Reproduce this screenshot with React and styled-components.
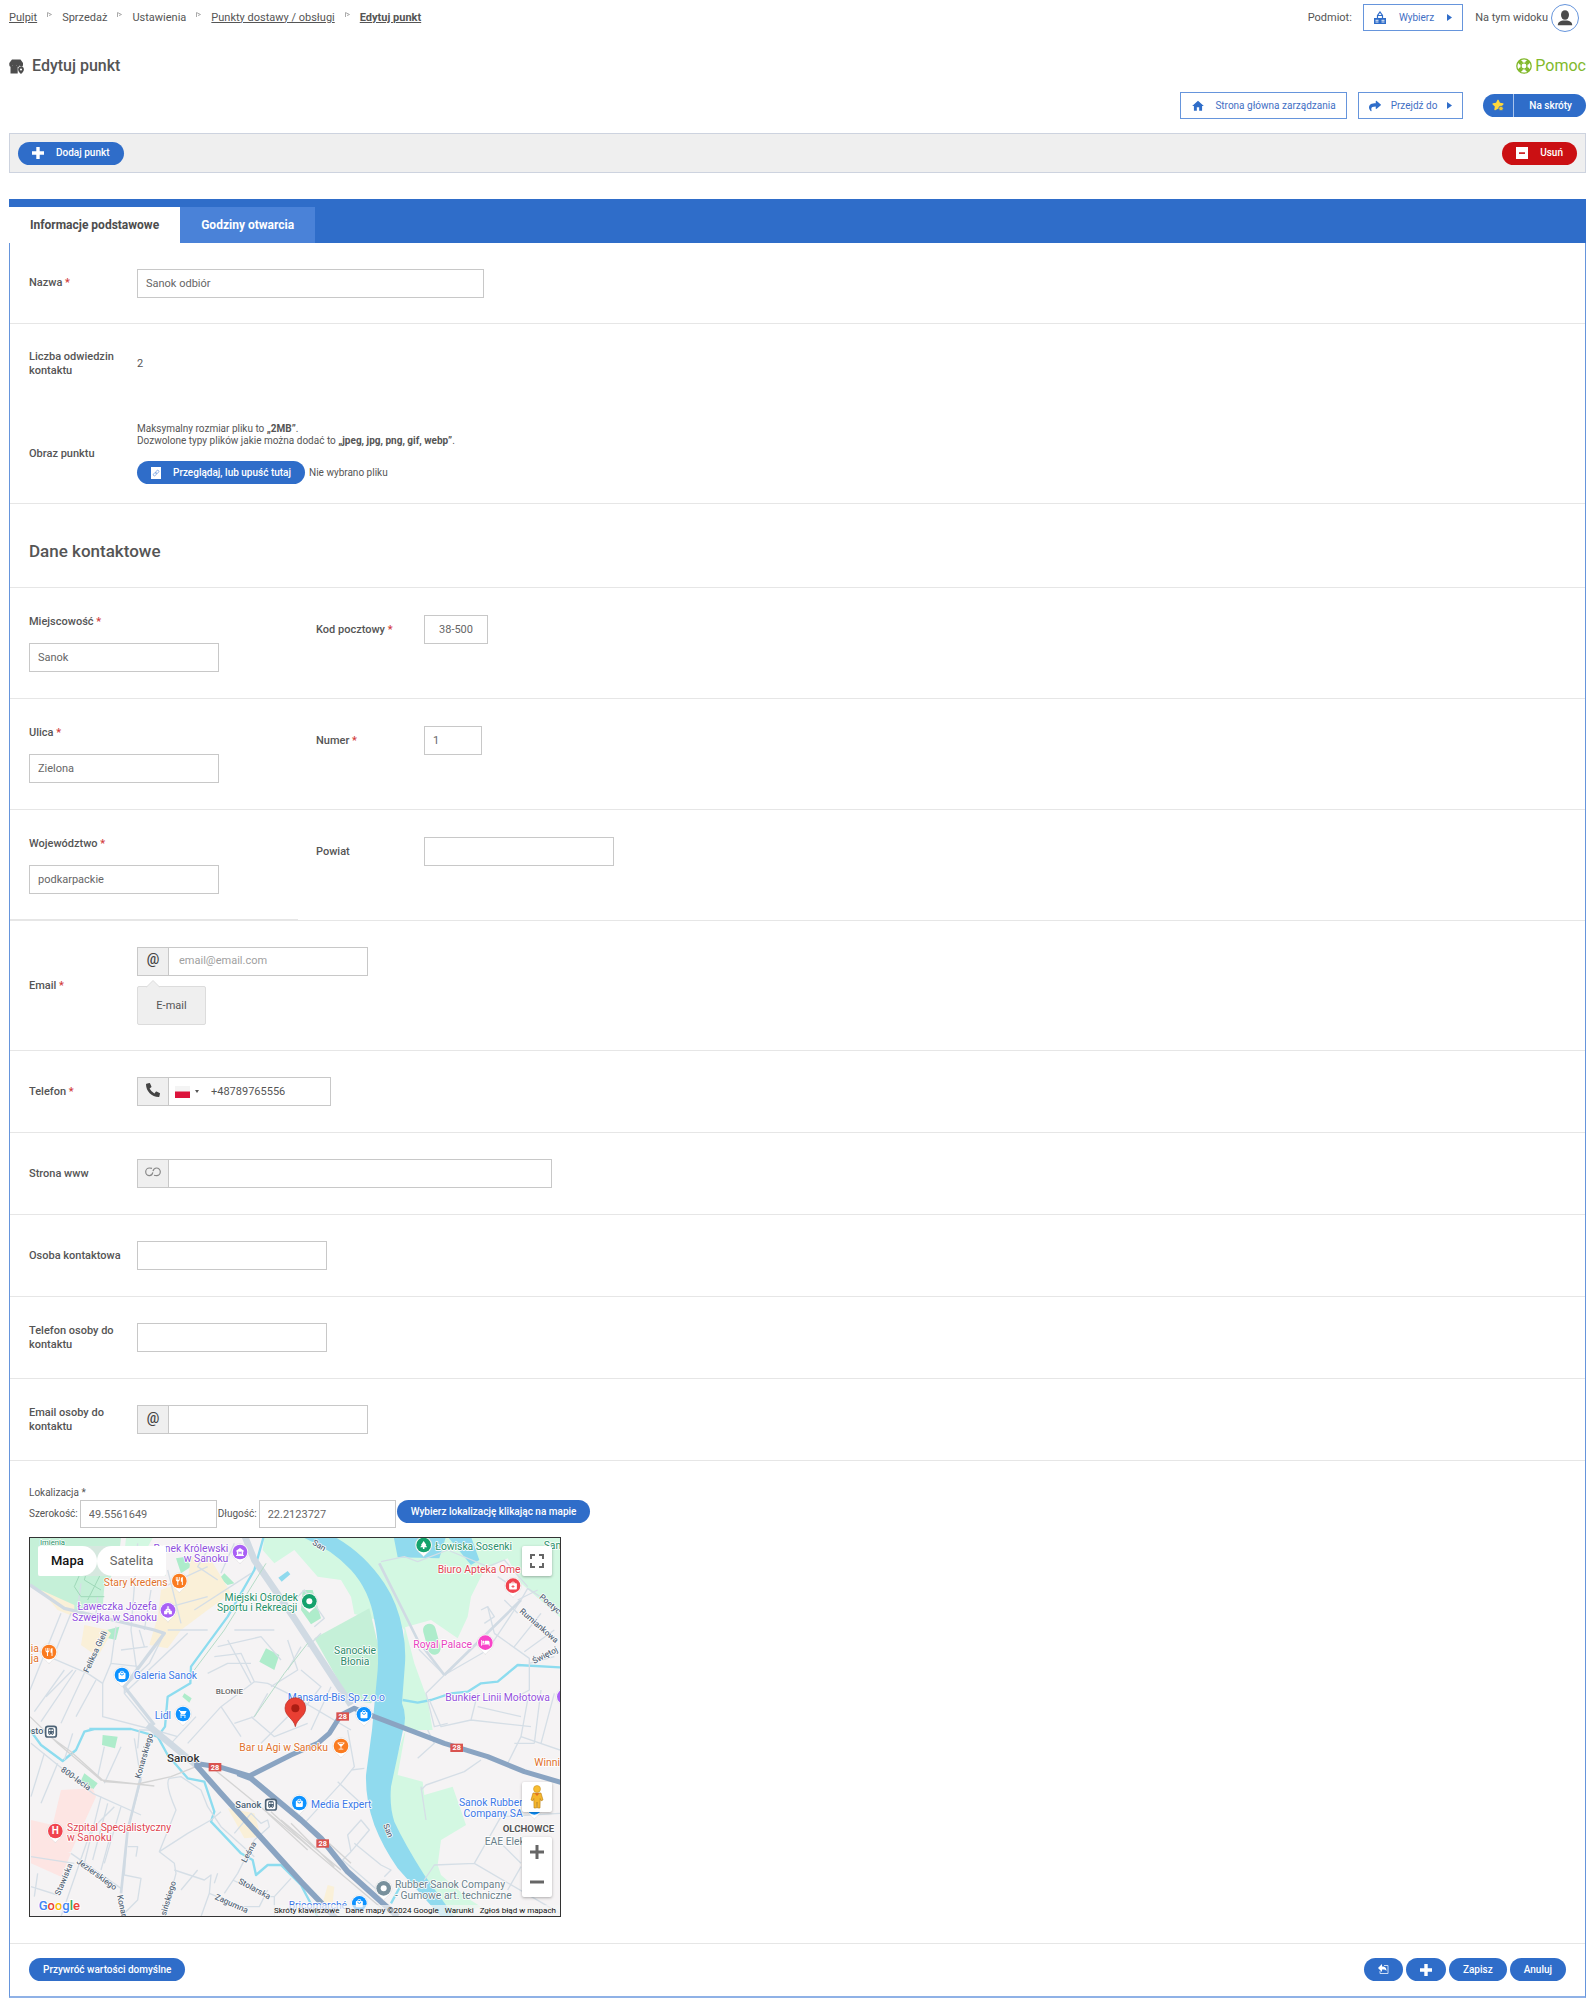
import React, { useRef, useState } from 'react';
import styled, { createGlobalStyle } from 'styled-components';
import { FaShare, FaStar, FaPhoneAlt } from 'react-icons/fa';
import {
  MdHome,
  MdRestaurant,
  MdMuseum,
  MdLocalMall,
  MdShoppingCart,
  MdHotel,
  MdLocalBar,
  MdTrain,
  MdPark,
  MdChurch,
  MdMedicalServices,
} from 'react-icons/md';

const blue = '#2f6dc9';
const text = '#555';

const GlobalStyle = createGlobalStyle`
  * {
    box-sizing: border-box;
  }
  body {
    margin: 0;
    background: #fff;
    color: ${text};
    font-family: Roboto, "Liberation Sans", sans-serif;
    font-size: 11px;
    line-height: 14px;
  }
  button, input {
    font: inherit;
    color: inherit;
  }
  button {
    cursor: pointer;
  }
`;

const Page = styled.div`
  padding: 3px 6px 3px 9px;
`;

const TopBar = styled.header`
  display: flex;
  align-items: center;
  justify-content: space-between;
  height: 29px;
`;

const Crumbs = styled.nav`
  display: flex;
  align-items: center;
  gap: 10px;
  svg {
    margin-bottom: 6px;
  }
`;

const Crumb = styled.a`
  color: ${text};
  font-weight: ${(p) => (p.$current ? 700 : 400)};
`;

const TopRight = styled.div`
  display: flex;
  align-items: center;
  padding-right: 7px;
`;

const OutlineButton = styled.button`
  display: flex;
  align-items: center;
  gap: ${(p) => p.$gap || 10}px;
  height: 27px;
  padding: 0 10px;
  border: 1px solid #6695dc;
  background: #fff;
  color: #3f6fc4;
  font-size: 10px;
  margin: ${(p) => p.$margin || 0};
  svg {
    color: ${blue};
  }
`;

const Avatar = styled.button`
  display: flex;
  align-items: center;
  justify-content: center;
  width: 28px;
  height: 28px;
  margin-left: 3px;
  padding: 0;
  border: 1px solid #6695dc;
  border-radius: 50%;
  background: #fff;
`;

const TitleBar = styled.div`
  display: flex;
  align-items: center;
  justify-content: space-between;
  height: 24px;
  margin-top: 22px;
`;

const Title = styled.h1`
  display: flex;
  align-items: center;
  gap: 8px;
  margin: 0;
  font-size: 16px;
  line-height: 20px;
  font-weight: 500;
`;

const Help = styled.a`
  display: flex;
  align-items: center;
  gap: 3px;
  color: #82b92c;
  font-size: 16px;
  line-height: 20px;
  text-decoration: none;
`;

const Shortcuts = styled.div`
  display: flex;
  align-items: center;
  justify-content: flex-end;
  margin-top: 14px;
  height: 27px;
`;

const Pill = styled.button`
  display: flex;
  align-items: center;
  justify-content: center;
  gap: 12px;
  height: 23px;
  padding: 0 14px;
  border: 0;
  border-radius: 12px;
  background: ${(p) => (p.$danger ? '#cb1013' : blue)};
  color: #fff;
  font-size: 10px;
  font-weight: 500;
  white-space: nowrap;
`;

const SplitPill = styled.button`
  display: flex;
  align-items: center;
  height: 23px;
  margin-left: 20px;
  padding: 0;
  border: 0;
  border-radius: 12px;
  background: ${blue};
  color: #fff;
  font-size: 10px;
  font-weight: 500;
`;

const StarPart = styled.span`
  display: flex;
  align-items: center;
  justify-content: center;
  width: 31px;
  height: 23px;
  border-right: 1px solid #a9c4ec;
`;

const SplitText = styled.span`
  padding: 0 14px 0 15px;
`;

const ActionBar = styled.div`
  display: flex;
  align-items: center;
  justify-content: space-between;
  height: 40px;
  margin-top: 14px;
  padding: 0 8px;
  border: 1px solid #cdd3df;
  background: #efefef;
`;

const Tabs = styled.div`
  display: flex;
  margin-top: 26px;
  padding-top: 8px;
  height: 44px;
  background: ${blue};
`;

const Tab = styled.button`
  height: 36px;
  padding: 0 21px;
  border: 0;
  background: ${(p) => (p.$active ? '#fff' : '#4a82d8')};
  color: ${(p) => (p.$active ? '#4d4d4d' : '#fff')};
  font-size: 12px;
  font-weight: 700;
`;

const Panel = styled.form`
  border: 1px solid #6695dc;
  border-top: 0;
  border-bottom: 2px solid #8fb1e6;
`;

const Row = styled.div`
  display: flex;
  align-items: center;
  min-height: ${(p) => p.$height || 82}px;
  padding: 0 19px;
  border-bottom: ${(p) => (p.$open ? '0' : '1px solid #e6e6e6')};
`;

const Label = styled.label`
  flex: none;
  width: ${(p) => (p.$stacked ? 'auto' : '108px')};
  padding-right: 12px;
  font-weight: 500;
`;

const Star = styled.span`
  color: #d23b3b;
`;

const TextInput = styled.input`
  width: ${(p) => p.$width || 190}px;
  height: ${(p) => p.$height || 29}px;
  padding: 0 8px;
  border: 1px solid #c8c8c8;
  border-radius: 0;
  background: #fff;
  color: #666;
  font-size: 11px;
  outline: none;
  text-align: ${(p) => p.$align || 'left'};
`;

const Hint = styled.p`
  margin: 0 0 14px;
  font-size: 10px;
  line-height: 12px;
`;

const FileLine = styled.div`
  display: flex;
  align-items: center;
  gap: 4px;
  font-size: 10px;
`;

const HiddenFile = styled.input`
  display: none;
`;

const HeadingRow = styled(Row)`
  padding-top: 10px;
`;

const Heading = styled.h2`
  margin: 0;
  font-size: 17px;
  line-height: 20px;
  font-weight: 500;
`;

const AddressRow = styled.div`
  display: flex;
  border-bottom: 1px solid #e6e6e6;
`;

const AddressMain = styled.div`
  display: flex;
  flex-direction: column;
  gap: 14px;
  width: 288px;
  padding: 27px 0 ${(p) => (p.$line ? 25 : 26)}px 19px;
  border-bottom: ${(p) => (p.$line ? '1px solid #e6e6e6' : '0')};
`;

const AddressSide = styled.div`
  display: flex;
  align-items: center;
  align-self: flex-start;
  padding: 27px 0 0 18px;
`;

const Group = styled.div`
  display: flex;
  width: ${(p) => p.$width}px;
  height: 29px;
  border: 1px solid #c8c8c8;
  background: #fff;
`;

const Addon = styled.span`
  display: flex;
  align-items: center;
  justify-content: center;
  flex: none;
  width: 31px;
  padding-bottom: 4px;
  border-right: 1px solid #c8c8c8;
  background: #efefef;
  color: #444;
  font-size: 14px;
  font-weight: 500;
`;

const GroupInput = styled.input`
  flex: 1;
  min-width: 0;
  padding: 0 10px;
  border: 0;
  background: transparent;
  color: #555;
  outline: none;
  &::placeholder {
    color: #a0a0a0;
  }
`;

const Country = styled.button`
  display: flex;
  align-items: center;
  gap: 5px;
  padding: 0 2px 0 6px;
  border: 0;
  background: transparent;
`;

const Bubble = styled.div`
  position: relative;
  width: 69px;
  margin-top: 10px;
  padding: 12px 0 11px;
  border: 1px solid #dcdcdc;
  border-radius: 2px;
  background: #efefef;
  text-align: center;
  svg {
    position: absolute;
    left: 8px;
    top: -7px;
  }
`;

const LocationBlock = styled.div`
  padding: 25px 18px 26px 19px;
  border-bottom: 1px solid #e6e6e6;
  font-size: 10px;
`;

const LocationFields = styled.div`
  display: flex;
  align-items: center;
  margin-bottom: 9px;
  height: 28px;
`;

const CoordLabel = styled.label`
  display: flex;
  align-items: center;
  gap: 2px;
  margin-right: 1px;
`;

const MapPick = styled(Pill)`
  align-self: flex-start;
`;

const MapFrame = styled.div`
  position: relative;
  width: 532px;
  height: 380px;
  border: 1px solid #333;
  overflow: hidden;
  font-size: 13px;
  > svg {
    display: block;
  }
`;

const MapTypes = styled.div`
  position: absolute;
  left: 8px;
  top: 8px;
  display: flex;
  background: #d6e8df;
`;

const MapType = styled.button`
  height: 30px;
  padding: 0 13px;
  border: 0;
  border-radius: ${(p) => (p.$active ? '2px 15px 15px 2px' : '15px 2px 2px 15px')};
  background: #fff;
  color: ${(p) => (p.$active ? '#111' : '#666')};
  font-weight: ${(p) => (p.$active ? 500 : 400)};
`;

const MapTools = styled.div`
  position: absolute;
  right: 8px;
  top: ${(p) => p.$top}px;
  border-radius: 2px;
  background: #fff;
  box-shadow: 0 1px 3px rgba(0, 0, 0, 0.3);
`;

const MapTool = styled.button`
  display: flex;
  align-items: center;
  justify-content: center;
  width: 30px;
  height: 30px;
  padding: 0;
  border: 0;
  background: transparent;
`;

const Attribution = styled.div`
  position: absolute;
  right: 0;
  bottom: 0;
  display: flex;
  gap: 6px;
  padding: 0 4px 0 1px;
  background: rgba(245, 245, 245, 0.7);
  color: #111;
  font-size: 8px;
  line-height: 11px;
  a {
    color: inherit;
    text-decoration: none;
  }
`;

const Footer = styled.div`
  display: flex;
  justify-content: space-between;
  padding: 14px 19px 15px;
`;

const FooterRight = styled.div`
  display: flex;
  gap: 3px;
`;

const Required = () => <Star>*</Star>;

const CrumbArrow = () => (
  <svg width="5" height="5" viewBox="0 0 5 5" fill="none" stroke="#aaa">
    <path d="M.5 5V.5L4.5 2.5L2 3.5" />
  </svg>
);

const Caret = () => (
  <svg width="5" height="7" viewBox="0 0 5 7" fill="currentColor">
    <path d="M0 0L5 3.5L0 7z" />
  </svg>
);

const PlusIcon = () => (
  <svg width="12" height="12" viewBox="0 0 12 12" fill="currentColor">
    <path d="M4.300 0h3.400v4.300H12v3.400H7.700V12H4.300V7.700H0V4.300h4.300z" />
  </svg>
);

const StoreIcon = () => (
  <svg width="15" height="15" viewBox="0 0 15 15" fill="#4d4d4d">
    <path d="M3 .5h8.500L14 4v2a1.600 1.600 0 0 1-3.200.300A1.700 1.700 0 0 1 7.300 6.300 1.700 1.700 0 0 1 3.700 6.300 1.600 1.600 0 0 1 .3 6V4z" />
    <path d="M1.500 7h7.200v7.500H1.500z" />
    <path d="M12 7.500a2.900 2.900 0 0 1 2.900 2.900c0 1.700-1.500 3.200-2.900 4.600-1.400-1.400-2.900-2.900-2.900-4.600A2.900 2.900 0 0 1 12 7.500zm0 1.900a1.100 1.100 0 1 0 0 2.200 1.100 1.100 0 0 0 0-2.200z" />
  </svg>
);

const CompanyIcon = () => (
  <svg width="12" height="13" viewBox="0 0 12 13" fill="none" stroke="currentColor" strokeWidth="1.200">
    <path d="M3.500 7V4.500L6 1l2.500 3.500V7M3.500 4.500h5" />
    <path fill="currentColor" d="M.6 7.500h4.800v4.900H.6zM6.600 7.500h4.800v4.900H6.600z" />
    <path stroke="#fff" strokeWidth=".9" d="M1.500 9.300h3M7.500 9.300h3M1.500 11h3M7.500 11h3" />
  </svg>
);

const LifeRing = () => (
  <svg width="16" height="16" viewBox="0 0 16 16" fill="none" stroke="currentColor">
    <circle cx="8" cy="8" r="7.200" strokeWidth="1.300" />
    <circle cx="8" cy="8" r="3" strokeWidth="1.200" />
    <path strokeWidth="4" d="M3 3l2.700 2.700M13 3l-2.700 2.700M3 13l2.700-2.700M13 13l-2.700-2.700" />
  </svg>
);

const UserIcon = () => (
  <svg width="16" height="16" viewBox="0 0 16 16" fill="#4a4a4a">
    <ellipse cx="8" cy="5" rx="4" ry="4.800" />
    <path d="M.8 15.300c0-3 2.200-4 5-4.700h4.400c2.800.7 5 1.700 5 4.700z" />
  </svg>
);

const MinusBox = () => (
  <svg width="12" height="12" viewBox="0 0 12 12">
    <path fill="#fff" d="M0 0h12v12H0z" />
    <path fill="#cb1013" d="M3 5.300h6v1.600H3z" />
  </svg>
);

const FavouriteIcon = () => (
  <svg width="13" height="13" viewBox="0 0 13 13">
    <FaStar size={12} color="#ffd83a" />
    <circle cx="9" cy="9.500" r="2.300" fill="#e9c83a" stroke={blue} strokeWidth=".8" />
  </svg>
);

const FileIcon = () => (
  <svg width="10" height="12" viewBox="0 0 10 12">
    <path fill="#fff" d="M0 0h10v12H0z" />
    <g transform="rotate(-45 5 6)" fill="none" stroke="#7aa3e0" strokeWidth=".8">
      <rect x="1.500" y="5" width="4" height="2.200" rx="1.100" />
      <rect x="4.500" y="5" width="4" height="2.200" rx="1.100" />
    </g>
  </svg>
);

const ChainIcon = () => (
  <svg width="16" height="10" viewBox="0 0 16 10" fill="none" stroke="#888" strokeWidth="1.200">
    <path d="M7 1.400Q6 1 4.500 1a3.800 3.800 0 0 0 0 7.600q2.800 0 3.300-3.200M9 8.200q1 .4 2.500.4a3.800 3.800 0 0 0 0-7.600Q8.700 1 8 4.200" />
  </svg>
);

const Flag = () => (
  <svg width="15" height="12" viewBox="0 0 15 12">
    <path fill="#f4f4f4" d="M0 0h15v6H0z" />
    <path fill="#dc143c" d="M0 5.500h15V12H0z" />
  </svg>
);

const ReturnIcon = () => (
  <svg width="11" height="11" viewBox="0 0 11 11">
    <path d="M6 1.500h4v8H2V7" fill="none" stroke="#c9dbf5" />
    <path d="M0 4l4-4v2.500c3 0 4.500 1 4.500 4.500C7.500 5.500 6 5.400 4 5.500V8z" fill="#fff" />
  </svg>
);

const Pegman = () => (
  <svg width="14" height="24" viewBox="0 0 14 24">
    <path d="M3 8h8l2 7-2 .8-.8-2.300L10 23H7.500L7 17l-.5 6H4l-.2-9.500-.8 2.300L1 15z" fill="#f5b62b" stroke="#b88017" strokeWidth=".6" />
    <circle cx="7" cy="4" r="3.500" fill="#f8bd30" stroke="#c08a20" strokeWidth=".5" />
    <path d="M4.500 8.200L7 11l2.500-2.800z" fill="#e0701d" />
  </svg>
);

const minorRoads = [
  'M27 165L130 235L400 300L430 310L385 400L310 470L310 490L400 600L470 620',
  'M95 385L200 430L245 460L245 560L400 600',
  'M30 350L95 385L150 250M75 500L155 420M27 480L120 250M40 545L130 420M60 575L165 420M120 580L190 430M165 560L225 450',
  'M285 290L270 400L245 460M330 300L350 440M300 360L380 350M270 400L355 410M355 300L370 350',
  'M180 160L170 235M230 200L225 250M350 40L330 300M390 180L370 300M430 170L560 110M450 230L560 200M440 120L480 280',
  'M560 60L530 110L590 150M600 130L640 40M520 240L690 130M560 300L440 300M310 490L500 310',
  'M500 640L600 530L700 455L740 460L820 500L990 600M600 530L660 620M700 455L660 370L580 380',
  'M560 430L620 400L690 400M620 330L690 460M590 350L720 320L780 390M640 300L760 300M800 330L830 420L750 470',
  'M690 560L760 620L860 580M720 640L800 560M740 490L700 560L640 580M840 420L900 470L830 560M870 600L930 470',
  'M830 200L850 180L910 265L880 290M840 350L800 420M900 310L860 350',
  'M400 605L525 700M340 625L360 750L320 900L310 1035L360 1045L350 1110L300 1160M450 640L525 560',
  'M350 655L355 600L400 600M30 640L215 790L360 855M155 610L130 690M250 650L230 740M300 650L250 760',
  'M30 800L70 670M60 820L110 700M280 830L210 900L120 1160M240 800L190 1000M260 820L215 990M300 830L250 1000',
  'M150 970L300 1075M30 980L160 1000M30 1070L110 1095M50 1030L40 1100M240 1020L270 910M320 950L350 950L345 980',
  'M445 745Q430 760 465 840L415 965L460 1000L465 1030L430 1160M445 745L480 740L540 780L560 830L600 890L700 980',
  'M415 965L500 910L570 870L600 845M460 1020L550 1050L570 1035L565 1090L540 1160M565 1090L660 1130L715 1130L740 1080',
  'M480 1080L530 1020M590 1030L580 1060M700 930L650 1030L610 1090M635 1050L740 1100L760 1100L810 1045M760 1100L760 1160',
  'M640 910L690 850L720 880L740 870L745 890L700 930M850 880L960 760L1000 710L980 600M950 755L1020 820M990 720L1030 715',
  'M980 915L1020 870L1045 900L990 965zM990 965L965 990L1080 1090M1000 940L1080 1005L1110 1020L1090 1040',
  'M1075 100L1190 330L1195 360L1270 435L1215 490L1240 590L1280 580M1270 435L1400 360L1500 210L1520 175L1617 240',
  'M1420 310L1525 385L1525 480L1470 510M1400 230L1420 310M1480 350L1560 250M1510 365L1600 300M1550 180L1490 210M1600 380L1525 400',
  'M1380 240L1400 230L1420 260L1390 280M1430 140L1490 180M1450 210L1490 250M1080 95L1150 80L1190 95L1280 60L1400 110L1450 90L1520 170',
  'M1225 510L1260 590L1350 570M1370 490L1350 570L1530 590M1370 530L1500 560M1520 510L1500 620L1460 700M1560 480L1540 640M1600 490L1560 640',
  'M1220 600L1240 640L1190 685M1500 620L1617 660M1480 640L1540 640M1200 780L1215 765L1330 725L1380 690',
  'M1200 770L1215 870M1617 850L1440 860L1360 1000L1240 1005L1210 1050M1360 1000L1617 1150M1430 930L1500 1000M1460 1080L1500 1010',
];

const Pin = ({ x, y, color, icon: Icon, dot }) => (
  <g transform={`translate(${x} ${y})`}>
    <path d="M0 36C-4 26-25 20-25 0a25 25 0 0 1 50 0C25 20 4 26 0 36z" fill="#fff" stroke="#ccc" strokeWidth="1" />
    <circle r="22" fill={color} />
    {Icon && <Icon x="-14" y="-14" size={28} color="#fff" />}
    {dot && <circle r="9" fill="#fff" />}
  </g>
);

const Shield = ({ x, y }) => (
  <g transform={`translate(${x} ${y})`}>
    <rect x="-19" y="-12" width="38" height="25" fill="#d9534f" />
    <text y="8" fontSize="22" fontWeight="700" fill="#fff" textAnchor="middle" stroke="none">28</text>
  </g>
);

const Station = ({ x, y }) => (
  <g transform={`translate(${x} ${y})`}>
    <rect x="-16" y="-16" width="32" height="32" rx="7" fill="#fff" stroke="#4d6275" strokeWidth="5" />
    <MdTrain x="-13" y="-13" size={26} color="#4d6275" />
  </g>
);

const places = [
  ['Rynek Królewski', 622, 65, '#8f4fdd', 'end'],
  ['w Sanoku', 622, 97, '#8f4fdd', 'end'],
  ['Stary Kredens', 440, 167, '#e0702a', 'end'],
  ['Ławeczka Józefa', 408, 241, '#8f4fdd', 'end'],
  ['Szwejka w Sanoku', 408, 272, '#8f4fdd', 'end'],
  ['ia', 29, 366, '#e0702a'],
  ['ja', 29, 396, '#e0702a'],
  ['Galeria Sanok', 338, 448, '#3b78e7'],
  ['Lidl', 401, 566, '#3b78e7'],
  ['Miejski Ośrodek', 831, 212, '#259068', 'end'],
  ['Sportu i Rekreacji', 829, 243, '#259068', 'end'],
  ['Łowiska Sosenki', 1243, 60, '#259068'],
  ['San', 1568, 58, '#259068'],
  ['Biuro Apteka Ome', 1250, 129, '#e0444f'],
  ['Royal Palace', 1177, 353, '#e83fc0'],
  ['Sanockie', 1002, 373, '#2c8a6a', 'middle'],
  ['Błonia', 1002, 405, '#2c8a6a', 'middle'],
  ['Mansard-Bis Sp.z.o.o', 1092, 514, '#3b78e7', 'end'],
  ['Bunkier Linii Mołotowa', 1273, 514, '#9350dc'],
  ['Bar u Agi w Sanoku', 655, 663, '#e0702a'],
  ['Szpital Specjalistyczny', 138, 902, '#e0444f'],
  ['w Sanoku', 138, 934, '#e0444f'],
  ['Media Expert', 870, 833, '#3b78e7'],
  ['Winni', 1540, 708, '#e0702a'],
  ['Sanok Rubber', 1505, 829, '#3b78e7', 'end'],
  ['Company SA', 1505, 861, '#3b78e7', 'end'],
  ['EAE Elek', 1391, 945, '#6a7f8a'],
  ['Rubber Sanok Company', 1122, 1075, '#6a7f8a'],
  ['- Gumowe art. techniczne', 1122, 1107, '#6a7f8a'],
  ['Bricomarché', 803, 1136, '#3b78e7'],
];

const streets = [
  ['Feliksa Gieli', 202, 430, -65],
  ['Poetyc', 1553, 203, 41],
  ['Rumiankowa', 1494, 246, 41],
  ['Świętoj', 1540, 402, -28],
  ['Konarskiego', 358, 747, -74],
  ['800-lecia', 118, 722, 36],
  ['Stawiska', 116, 1098, -67],
  ['Jezierskiego', 165, 998, 36],
  ['Konar', 288, 1097, 78],
  ['sińskiego', 434, 1158, -73],
  ['Leśna', 675, 1000, -62],
  ['Stolarska', 650, 1059, 28],
  ['Zagumna', 580, 1107, 24],
  ['San', 872, 42, 32],
  ['San', 1086, 885, 68],
];

const CityMap = () => (
  <svg width="530" height="378" viewBox="27 24 1590 1134" fontFamily="Roboto, sans-serif">
    <path fill="#f5f3f4" d="M27 24h1590v1134H27z" />
    {/* parks */}
    <path fill="#c5f0d8" d="M27 24H300L290 110L250 170L245 232L160 245L130 230L27 165z" />
    <path fill="#d3f8e2" d="M315 24H395L370 70H310zM730 24H960L1070 150L1070 270L1000 252L990 200L960 150L890 140L820 60L760 100L725 60z" />
    <path fill="#d3f8e2" d="M930 24H1617V262L1500 160L1460 85L1390 120L1350 200L1340 260L1310 325L1230 270L1152 292L1180 400L1220 510L1235 600H1140L1150 300z" />
    <path fill="#c5f0d8" d="M880 325L1045 235L1075 360L1070 490L1050 520L985 510z" />
    <path fill="#d3f8e2" d="M1155 595L1130 735L1205 755L1210 795L1295 770L1335 885L1260 930L1250 1005L1260 1035L1340 1105L1380 1130L1290 1158L1100 880L1110 730z" />
    <path fill="#aeeccb" d="M465 85L495 80L510 110L480 130zM610 130L640 160L620 165L596 145zM735 355L775 375L760 420L715 395zM258 300L295 290L285 330L262 325zM490 490L512 505L505 518L484 500zM845 180L875 180L900 265L870 283L840 240z" />
    <path fill="#aeeccb" d="M245 615L290 620L282 655L243 645zM190 730L230 760L215 780L178 755z" />
    <path d="M1225 300L1240 355" stroke="#aeeccb" strokeWidth="38" strokeLinecap="round" />
    {/* town centre and hospital */}
    <path fill="#faf0d8" d="M510 80L570 90L630 190L560 240L480 300L440 355L385 345L410 260L420 180L500 150zM190 285L260 300L270 310L230 380L180 345zM60 180L160 225L160 260L110 240z" />
    <path fill="#faf0d8" d="M620 835L700 850L720 920L670 925zM920 1065L940 1070L935 1120L905 1120z" />
    <path fill="#fde5e3" d="M120 780L215 775L225 800L150 965L30 1000L30 870L95 885z" />
    <path fill="#fde5e3" d="M55 940L150 970L120 1040L30 1000z" />
    {/* river and ponds */}
    <path
      fill="#90daee"
      d="M840 20Q930 55 990 120Q1045 180 1060 270Q1075 340 1070 420L1053 600L1035 735Q1033 810 1060 885Q1085 950 1130 1015L1260 1160H1300L1210 1035Q1150 940 1120 875Q1105 830 1110 770L1145 605Q1160 560 1143 520L1152 400Q1155 350 1145 300Q1130 220 1090 160Q1030 70 940 20z"
    />
    <path fill="#90daee" d="M1118 20H1275L1255 85L1130 82zM1280 20H1350L1375 90L1350 105zM772 143L800 123L808 133L782 155z" />
    <g fill="none" stroke="#8ddcef" strokeWidth="7" strokeLinejoin="round">
      <path d="M728 20L700 120L620 260L510 410L508 460L440 500L432 590L410 620L440 675L500 745L550 755L580 845L570 875L660 970L695 990L705 1035L740 1005L780 1005L840 1065L890 1160" />
      <path d="M27 600L60 645L125 693L165 660L190 605L220 597H330L410 620M205 597H320" />
      <path d="M1145 510L1190 518L1230 510L1290 490L1340 485L1380 460L1430 455L1490 405L1617 412" />
      <path d="M1140 1065L1110 1120" />
    </g>
    <g fill="none" stroke="#d5dee6" strokeWidth="4" strokeLinejoin="round">
      {minorRoads.map((d) => (
        <path key={d} d={d} />
      ))}
    </g>
    <g fill="none" stroke="#d0dae3" strokeLinejoin="round">
      <path strokeWidth="10" d="M27 165L130 235L400 300L430 310L310 470L400 585" />
      <path strokeWidth="20" d="M672 20L700 90L820 265L990 525M380 585L525 705" />
      <path strokeWidth="8" d="M1270 435L1500 210M1075 100L1190 330L1270 435M360 740L320 900L300 1090" />
    </g>
    {/* railway */}
    <g fill="none" stroke="#d4d4d4" strokeWidth="4">
      <path d="M60 600L150 665L250 755L350 762L450 740L525 710M27 560L110 640L240 750L400 768M570 710L840 930L1100 1150" />
      <path d="M740 850L860 960M750 845L870 955M780 870L960 1020M870 890L990 1000M810 880L940 1010" />
    </g>
    <path fill="none" stroke="#b5dcc8" strokeWidth="3" d="M735 100L610 300L520 420M860 340L790 430L700 560" />
    <path fill="none" stroke="#9fd9b9" strokeWidth="3" d="M200 80L160 170L180 200L250 200M215 60L190 150L240 180M240 130L200 210" />
    {/* national roads */}
    <g fill="none" stroke="#8aa4c2" strokeLinejoin="round">
      <path strokeWidth="15" d="M520 700L600 712L685 738L810 675L890 640L925 610L960 555L1000 535L1060 560L1270 640L1400 680L1510 725L1620 757" />
      <path strokeWidth="17" d="M525 705L600 790L840 1055L950 1170M650 730L690 745L840 870L900 925L980 1025L1130 1160" />
    </g>
    {/* names */}
    <g stroke="#fff" strokeWidth="5" strokeLinejoin="round" paintOrder="stroke">
      <g fontSize="25" fontWeight="500" fill="#5b6b7c" strokeWidth="4">
        {streets.map(([name, x, y, turn]) => (
          <text key={name + x} transform={`translate(${x} ${y}) rotate(${turn})`}>{name}</text>
        ))}
        <text x="57" y="46" fontSize="23" fontWeight="400" fill="#259068">Imienia</text>
        <text x="584" y="491" fontSize="24" fill="#666">BŁONIE</text>
        <text x="1445" y="905" fontSize="29" fontWeight="700" fill="#555">OLCHOWCE</text>
        <text x="29" y="612" fontSize="27" fill="#4d6275">sto</text>
        <text x="643" y="833" fontSize="28" fill="#4d6275">Sanok</text>
        <text x="438" y="696" fontSize="35" fill="#333">Sanok</text>
      </g>
      <g fontSize="31">
        {places.map(([name, x, y, fill, anchor]) => (
          <text key={name + y} x={x} y={y} fill={fill} textAnchor={anchor || 'start'}>{name}</text>
        ))}
      </g>
    </g>
    <Shield x="965" y="559" />
    <Shield x="582" y="711" />
    <Shield x="905" y="940" />
    <Shield x="1307" y="653" />
    <Station x="90" y="605" />
    <Station x="750" y="824" />
    <Pin x="475" y="153" color="#fa7b20" icon={MdRestaurant} />
    <Pin x="84" y="366" color="#fa7b20" icon={MdRestaurant} />
    <Pin x="960" y="648" color="#fa7b20" icon={MdLocalBar} />
    <Pin x="657" y="66" color="#a960f5" icon={MdMuseum} />
    <Pin x="441" y="241" color="#a960f5" icon={MdChurch} />
    <Pin x="1630" y="500" color="#a960f5" />
    <Pin x="303" y="435" color="#0d92ff" icon={MdLocalMall} />
    <Pin x="486" y="552" color="#0d92ff" icon={MdShoppingCart} />
    <Pin x="1029" y="553" color="#0d92ff" icon={MdLocalMall} />
    <Pin x="835" y="819" color="#0d92ff" icon={MdLocalMall} />
    <Pin x="1540" y="832" color="#0d92ff" />
    <Pin x="1015" y="1120" color="#0d92ff" icon={MdLocalMall} />
    <Pin x="865" y="214" color="#14a26c" dot />
    <Pin x="1208" y="45" color="#14a26c" icon={MdPark} />
    <Pin x="1476" y="167" color="#f0444f" icon={MdMedicalServices} />
    <Pin x="1393" y="338" color="#f844c8" icon={MdHotel} />
    <Pin x="1088" y="1075" color="#78909c" dot />
    <Pin x="103" y="903" color="#f0444f" />
    <text x="103" y="913" fontSize="30" fontWeight="700" fill="#fff" textAnchor="middle">H</text>
    <path d="M823 590C818 565 792 560 792 534a31 31 0 0 1 62 0C854 560 828 565 823 590z" fill="#e93f33" stroke="#b52a20" strokeWidth="2" />
    <circle cx="823" cy="535" r="12" fill="#ab1d13" />
    <text x="53" y="1139" fontSize="39" fontWeight="500" stroke="#fff" strokeWidth="5" paintOrder="stroke">
      <tspan fill="#4285f4">G</tspan>
      <tspan fill="#ea4335">o</tspan>
      <tspan fill="#fbbc04">o</tspan>
      <tspan fill="#4285f4">g</tspan>
      <tspan fill="#34a853">l</tspan>
      <tspan fill="#ea4335">e</tspan>
    </text>
  </svg>
);

const AddressLine = ({ id, label, value, line, children }) => (
  <AddressRow>
    <AddressMain $line={line}>
      <Label $stacked htmlFor={id}>{label} <Required /></Label>
      <TextInput id={id} defaultValue={value} />
    </AddressMain>
    <AddressSide>{children}</AddressSide>
  </AddressRow>
);

function App() {
  const [tab, setTab] = useState('info');
  const [fileName, setFileName] = useState('Nie wybrano pliku');
  const fileInput = useRef(null);

  return (
    <>
      <GlobalStyle />
      <Page>
        <TopBar>
          <Crumbs>
            <Crumb href="#pulpit">Pulpit</Crumb>
            <CrumbArrow />
            <span>Sprzedaż</span>
            <CrumbArrow />
            <span>Ustawienia</span>
            <CrumbArrow />
            <Crumb href="#punkty">Punkty dostawy / obsługi</Crumb>
            <CrumbArrow />
            <Crumb href="#edytuj" $current>Edytuj punkt</Crumb>
          </Crumbs>
          <TopRight>
            <span>Podmiot:</span>
            <OutlineButton type="button" $gap={13} $margin="0 12px 0 11px">
              <CompanyIcon />
              Wybierz
              <Caret />
            </OutlineButton>
            <span>Na tym widoku</span>
            <Avatar type="button" aria-label="Konto"><UserIcon /></Avatar>
          </TopRight>
        </TopBar>

        <TitleBar>
          <Title><StoreIcon />Edytuj punkt</Title>
          <Help href="#pomoc"><LifeRing />Pomoc</Help>
        </TitleBar>

        <Shortcuts>
          <OutlineButton type="button"><MdHome size={14} />Strona główna zarządzania</OutlineButton>
          <OutlineButton type="button" $margin="0 0 0 11px">
            <FaShare size={12} />
            Przejdź do
            <Caret />
          </OutlineButton>
          <SplitPill type="button">
            <StarPart><FavouriteIcon /></StarPart>
            <SplitText>Na skróty</SplitText>
          </SplitPill>
        </Shortcuts>

        <ActionBar>
          <Pill type="button"><PlusIcon />Dodaj punkt</Pill>
          <Pill type="button" $danger><MinusBox />Usuń</Pill>
        </ActionBar>

        <Tabs role="tablist">
          <Tab role="tab" aria-selected={tab === 'info'} $active={tab === 'info'} onClick={() => setTab('info')}>
            Informacje podstawowe
          </Tab>
          <Tab role="tab" aria-selected={tab === 'hours'} $active={tab === 'hours'} onClick={() => setTab('hours')}>
            Godziny otwarcia
          </Tab>
        </Tabs>

        <Panel onSubmit={(e) => e.preventDefault()}>
          <Row $height={81}>
            <Label htmlFor="nazwa">Nazwa <Required /></Label>
            <TextInput id="nazwa" $width={347} defaultValue="Sanok odbiór" />
          </Row>
          <Row $height={80} $open>
            <Label as="div">Liczba odwiedzin kontaktu</Label>
            <span>2</span>
          </Row>
          <Row $height={100}>
            <Label htmlFor="obraz">Obraz punktu</Label>
            <div>
              <Hint>
                Maksymalny rozmiar pliku to <b>„2MB”</b>.<br />
                Dozwolone typy plików jakie można dodać to <b>„jpeg, jpg, png, gif, webp”</b>.
              </Hint>
              <FileLine>
                <Pill type="button" onClick={() => fileInput.current.click()}>
                  <FileIcon />
                  Przeglądaj, lub upuść tutaj
                </Pill>
                <HiddenFile
                  id="obraz"
                  type="file"
                  ref={fileInput}
                  onChange={(e) => setFileName(e.target.files[0] ? e.target.files[0].name : 'Nie wybrano pliku')}
                />
                <span>{fileName}</span>
              </FileLine>
            </div>
          </Row>
          <HeadingRow $height={84}>
            <Heading>Dane kontaktowe</Heading>
          </HeadingRow>

          <AddressLine id="miejscowosc" label="Miejscowość" value="Sanok">
            <Label htmlFor="kod">Kod pocztowy <Required /></Label>
            <TextInput id="kod" $width={64} $align="center" defaultValue="38-500" />
          </AddressLine>
          <AddressLine id="ulica" label="Ulica" value="Zielona">
            <Label htmlFor="numer">Numer <Required /></Label>
            <TextInput id="numer" $width={58} defaultValue="1" />
          </AddressLine>
          <AddressLine id="wojewodztwo" label="Województwo" value="podkarpackie" line>
            <Label htmlFor="powiat">Powiat</Label>
            <TextInput id="powiat" />
          </AddressLine>

          <Row $height={130}>
            <Label htmlFor="email">Email <Required /></Label>
            <div>
              <Group $width={231}>
                <Addon>@</Addon>
                <GroupInput id="email" type="email" placeholder="email@email.com" />
              </Group>
              <Bubble>
                <svg width="14" height="8" viewBox="0 0 14 8">
                  <path d="M0 7.500L7 .5L14 7.500" fill="#efefef" stroke="#dcdcdc" />
                </svg>
                E-mail
              </Bubble>
            </div>
          </Row>
          <Row>
            <Label htmlFor="telefon">Telefon <Required /></Label>
            <Group $width={194}>
              <Addon><FaPhoneAlt size={14} /></Addon>
              <Country type="button" aria-label="Polska +48">
                <Flag />
                <svg width="4" height="3" viewBox="0 0 4 3"><path d="M0 0h4L2 3z" fill="#555" /></svg>
              </Country>
              <GroupInput id="telefon" type="tel" defaultValue="+48789765556" />
            </Group>
          </Row>
          <Row>
            <Label htmlFor="www">Strona www</Label>
            <Group $width={415}>
              <Addon><ChainIcon /></Addon>
              <GroupInput id="www" />
            </Group>
          </Row>
          <Row>
            <Label htmlFor="osoba">Osoba kontaktowa</Label>
            <TextInput id="osoba" />
          </Row>
          <Row>
            <Label htmlFor="telefon-osoby">Telefon osoby do kontaktu</Label>
            <TextInput id="telefon-osoby" />
          </Row>
          <Row>
            <Label htmlFor="email-osoby">Email osoby do kontaktu</Label>
            <Group $width={231}>
              <Addon>@</Addon>
              <GroupInput id="email-osoby" type="email" />
            </Group>
          </Row>

          <LocationBlock>
            <div>Lokalizacja *</div>
            <LocationFields>
              <CoordLabel>
                Szerokość:
                <TextInput $width={137} $height={28} defaultValue="49.5561649" />
              </CoordLabel>
              <CoordLabel>
                Długość:
                <TextInput $width={137} $height={28} defaultValue="22.2123727" />
              </CoordLabel>
              <MapPick type="button">Wybierz lokalizację klikając na mapie</MapPick>
            </LocationFields>
            <MapFrame>
              <CityMap />
              <MapTypes>
                <MapType type="button" $active>Mapa</MapType>
                <MapType type="button">Satelita</MapType>
              </MapTypes>
              <MapTools $top={8}>
                <MapTool type="button" aria-label="Pełny ekran">
                  <svg width="14" height="14" viewBox="0 0 14 14" fill="none" stroke="#666" strokeWidth="2">
                    <path d="M1 5V1h4M9 1h4v4M13 9v4H9M5 13H1V9" />
                  </svg>
                </MapTool>
              </MapTools>
              <MapTools $top={244}>
                <MapTool type="button" aria-label="Street View"><Pegman /></MapTool>
              </MapTools>
              <MapTools $top={299}>
                <MapTool type="button" aria-label="Powiększ">
                  <svg width="14" height="14" viewBox="0 0 14 14" stroke="#666" strokeWidth="3">
                    <path d="M7 0v14M0 7h14" />
                  </svg>
                </MapTool>
                <MapTool type="button" aria-label="Pomniejsz">
                  <svg width="14" height="14" viewBox="0 0 14 14" stroke="#666" strokeWidth="3">
                    <path d="M0 7h14" />
                  </svg>
                </MapTool>
              </MapTools>
              <Attribution>
                <span>Skróty klawiszowe</span>
                <span>Dane mapy ©2024 Google</span>
                <a href="#warunki">Warunki</a>
                <a href="#blad">Zgłoś błąd w mapach</a>
              </Attribution>
            </MapFrame>
          </LocationBlock>

          <Footer>
            <Pill type="reset">Przywróć wartości domyślne</Pill>
            <FooterRight>
              <Pill type="button" aria-label="Zapisz i wróć"><ReturnIcon /></Pill>
              <Pill type="button" aria-label="Zapisz i dodaj"><PlusIcon /></Pill>
              <Pill type="submit">Zapisz</Pill>
              <Pill type="button">Anuluj</Pill>
            </FooterRight>
          </Footer>
        </Panel>
      </Page>
    </>
  );
}

export default App;
